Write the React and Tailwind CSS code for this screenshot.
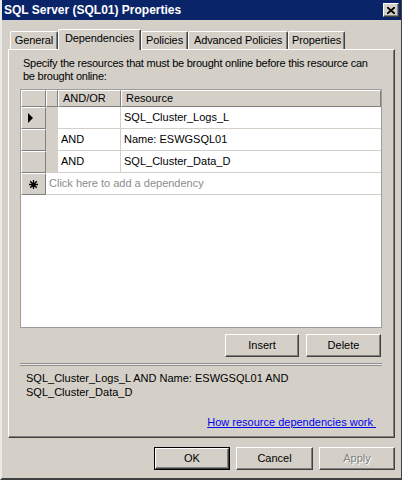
import React from "react";

const font = { fontFamily: '"Liberation Sans", Arial, sans-serif' };

function Btn({ children, w, def, disabled }) {
  const inner = (
    <div
      className={`h-full w-full flex items-center justify-center bg-[#d4d0c8] border-t border-l border-t-white border-l-white border-r border-b border-r-[#404040] border-b-[#404040] shadow-[inset_-1px_-1px_0_#808080] text-[11px] ${
        disabled ? "text-[#808080] [text-shadow:1px_1px_0_#fff]" : "text-black"
      }`}
    >
      {children}
    </div>
  );
  return (
    <div className={`${w} h-[23px] ${def ? "border border-black" : ""}`}>{inner}</div>
  );
}

function Tab({ label, w, selected }) {
  return (
    <div
      className={`${w} flex items-center justify-center whitespace-nowrap bg-[#d4d0c8] border-t border-l border-t-white border-l-white border-r border-r-[#404040] shadow-[inset_-1px_0_0_#808080] rounded-t-[2px] text-[11px] tracking-[-0.1px] ${
        selected ? "h-[21px] relative z-10 -mb-[1px] pb-[3px]" : "h-[18px]"
      }`}
    >
      {label}
    </div>
  );
}

function HeadCell({ className = "", children }) {
  return (
    <div
      className={`h-full bg-[#d4d0c8] border-t border-l border-t-white border-l-white border-r border-b border-r-[#808080] border-b-[#808080] flex items-center ${className}`}
    >
      {children}
    </div>
  );
}

function Row({ andor, res, arrow }) {
  return (
    <div className="flex h-[22px]">
      <HeadCell className="w-[25px] pl-[6px]">
        {arrow && (
          <svg width="6" height="10" viewBox="0 0 6 10">
            <path d="M0 0 L5 5 L0 10 Z" fill="#000" />
          </svg>
        )}
      </HeadCell>
      <div className="w-[12px] h-full bg-[#d4d0c8] border-b border-b-[#d4d0c8]" />
      <div className="w-[63px] h-full bg-white border-r border-b border-[#d4d0c8] flex items-center pl-[3px] text-[11px]">
        {andor}
      </div>
      <div className="flex-1 h-full bg-white border-b border-[#d4d0c8] flex items-center pl-[3px] text-[11px]">
        {res}
      </div>
    </div>
  );
}

export default function App() {
  return (
    <div
      style={font}
      className="w-[402px] h-[480px] bg-[#d4d0c8] border-l-2 border-l-[#ebe9e4] border-r border-r-[#404040] border-b-2 border-b-[#404040] flex flex-col text-black overflow-hidden"
    >
      {/* Title bar */}
      <div className="h-[20px] bg-[#0a246a] flex items-center justify-between pl-[2px] pr-[2px]">
        <span className="text-white font-bold text-[12px] leading-none whitespace-nowrap">
          SQL Server (SQL01) Properties
        </span>
        <div className="w-[16px] h-[14px] bg-[#d4d0c8] border-t border-l border-t-white border-l-white border-r border-b border-r-[#404040] border-b-[#404040] shadow-[inset_-1px_-1px_0_#808080] flex items-center justify-center">
          <svg width="8" height="7" viewBox="0 0 8 7">
            <path d="M0 0 L8 7 M8 0 L0 7" stroke="#000" strokeWidth="1.8" />
          </svg>
        </div>
      </div>

      {/* Tabs */}
      <div className="mt-[8px] flex items-end pl-[8px] h-[21px]">
        <Tab label="General" w="w-[48px]" />
        <Tab label="Dependencies" w="w-[83px]" selected />
        <Tab label="Policies" w="w-[47px]" />
        <Tab label="Advanced Policies" w="w-[100px]" />
        <Tab label="Properties" w="w-[57px]" />
      </div>

      {/* Panel */}
      <div className="ml-[6px] w-[387px] h-[389px] border-t border-l border-t-white border-l-white border-r border-b border-r-[#404040] border-b-[#404040] shadow-[inset_-1px_-1px_0_#808080] flex flex-col pl-[11px] pr-[12px]">
        <div className="pl-[3px] pt-[7px] text-[11px] leading-[13px] h-[39px] tracking-[-0.25px] whitespace-nowrap">
          Specify the resources that must be brought online before this resource can
          <br />
          be brought online:
        </div>

        {/* Grid */}
        <div className="w-[362px] h-[239px] border border-[#9d9d9d] bg-white flex flex-col">
          <div className="flex h-[17px]">
            <HeadCell className="w-[25px]" />
            <HeadCell className="w-[12px]" />
            <HeadCell className="w-[63px] pl-[4px] text-[11px]">AND/OR</HeadCell>
            <HeadCell className="flex-1 pl-[4px] text-[11px]">Resource</HeadCell>
          </div>
          <Row arrow andor="" res="SQL_Cluster_Logs_L" />
          <Row andor="AND" res="Name: ESWGSQL01" />
          <Row andor="AND" res="SQL_Cluster_Data_D" />
          <div className="flex h-[22px]">
            <HeadCell className="w-[25px] justify-center">
              <svg width="9" height="9" viewBox="0 0 9 9">
                <path d="M4.5 0 V9 M0 4.5 H9 M1.2 1.2 L7.8 7.8 M7.8 1.2 L1.2 7.8" stroke="#000" strokeWidth="1.3" />
              </svg>
            </HeadCell>
            <div className="flex-1 h-full bg-white border-b border-[#d4d0c8] flex items-center pl-[3px] text-[11px] text-[#8c8c8c]">
              Click here to add a dependency
            </div>
          </div>
        </div>

        {/* Insert / Delete */}
        <div className="mt-[6px] flex justify-end gap-[7px] pr-[1px]">
          <Btn w="w-[74px]">Insert</Btn>
          <Btn w="w-[75px]">Delete</Btn>
        </div>

        {/* Separator */}
        <div className="mt-[6px] w-[362px] h-[3px] border-t border-b border-[#909090] bg-[#ebe9e4]" />

        <div className="mt-[5px] pl-[6px] text-[11px] leading-[14px]">
          SQL_Cluster_Logs_L AND Name: ESWGSQL01 AND
          <br />
          SQL_Cluster_Data_D
        </div>

        <div className="mt-[15px] flex justify-end pr-[6px]">
          <span className="text-[11px] text-[#0000ee] underline">How resource dependencies work&nbsp;</span>
        </div>
      </div>

      {/* Bottom buttons */}
      <div className="mt-[9px] flex justify-end gap-[6px] pr-[6px]">
        <Btn w="w-[76px]" def>OK</Btn>
        <Btn w="w-[77px]">Cancel</Btn>
        <Btn w="w-[76px]" disabled>Apply</Btn>
      </div>
    </div>
  );
}
